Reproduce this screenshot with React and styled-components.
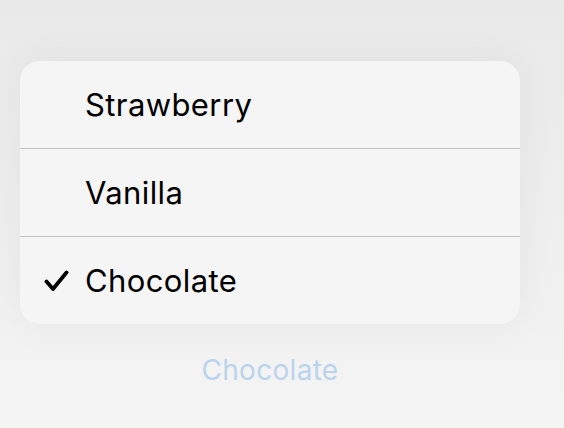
import React, { useState } from "react";
import styled, { createGlobalStyle } from "styled-components";

const GlobalStyle = createGlobalStyle`
  html, body {
    margin: 0;
    padding: 0;
  }
  body {
    font-family: Inter, "Noto Sans", sans-serif;
    background: linear-gradient(#e9e9e9, #f4f4f4);
    min-height: 428px;
  }
`;

const options = ["Strawberry", "Vanilla", "Chocolate"];

const Page = () => {
  const [selected, setSelected] = useState("Chocolate");
  return (
    <Wrapper>
      <Menu>
        {options.map((opt) => (
          <Option key={opt} onClick={() => setSelected(opt)}>
            <Check>
              {selected === opt && (
                <svg width="25" height="22" viewBox="0 0 25 22">
                  <path
                    d="M2.5 11.5 L9 19 L22.5 2.5"
                    fill="none"
                    stroke="#000"
                    strokeWidth="3.8"
                    strokeLinecap="round"
                    strokeLinejoin="round"
                  />
                </svg>
              )}
            </Check>
            <Label>{opt}</Label>
          </Option>
        ))}
      </Menu>
      <Value>{selected}</Value>
    </Wrapper>
  );
};

const Wrapper = styled.div`
  width: 564px;
  height: 428px;
  padding: 61px 0 0 20px;
  box-sizing: border-box;
  display: flex;
  flex-direction: column;
  align-items: flex-start;
`;

const Menu = styled.div`
  width: 500px;
  background: #f5f5f5;
  border-radius: 20px;
  overflow: hidden;
  box-shadow: 0 0 40px rgba(0, 0, 0, 0.05);
  display: flex;
  flex-direction: column;
`;

const Option = styled.div`
  height: 87px;
  display: flex;
  align-items: center;
  cursor: pointer;
  & + & {
    border-top: 1px solid #c4c4c4;
  }
`;

const Check = styled.div`
  flex: 0 0 65px;
  padding-left: 24px;
  box-sizing: border-box;
  display: flex;
  align-items: center;
  svg {
    display: block;
  }
`;

const Label = styled.span`
  font-size: 31px;
  color: #000;
  letter-spacing: 0.4px;
`;

const Value = styled.div`
  width: 500px;
  text-align: center;
  margin-top: 29px;
  font-size: 28px;
  color: #bad4ee;
  letter-spacing: 0.3px;
`;

const App = () => (
  <>
    <GlobalStyle />
    <Page />
  </>
);

export default App;
